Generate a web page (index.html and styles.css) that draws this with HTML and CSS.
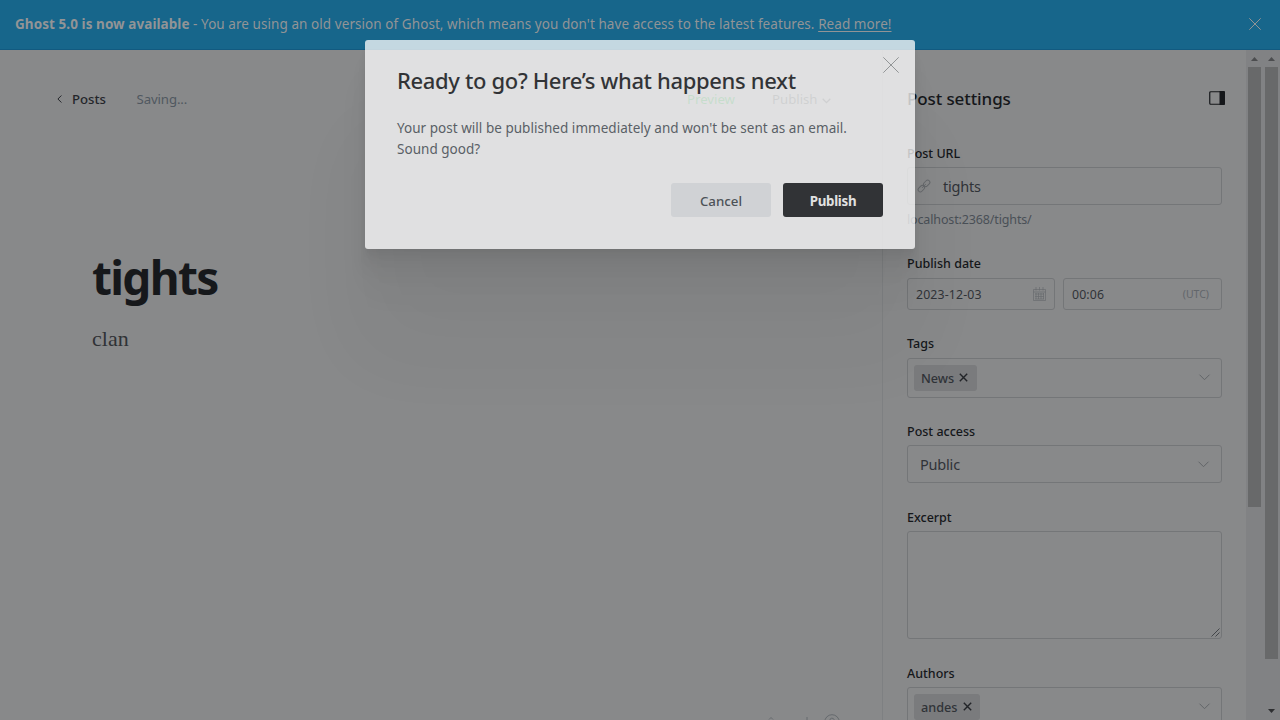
FILE: index.html
```
<!DOCTYPE html>
<html lang="en">
<head>
<meta charset="utf-8">
<title>Ghost editor</title>
<link rel="stylesheet" href="styles.css">
</head>
<body>
<div class="app">
  <header class="banner">
    <p class="banner-text"><b>Ghost 5.0 is now available</b> - You are using an old version of Ghost, which means you don't have access to the latest features. <a>Read more!</a></p>
    <svg class="banner-close" width="12" height="12" viewBox="0 0 12 12"><path d="M.3.3l11.4 11.4M11.7.3L.3 11.7"/></svg>
  </header>
  <div class="workspace">
    <main class="editor">
      <nav class="toolbar">
        <svg class="back" width="5" height="8" viewBox="0 0 5 8"><path d="M4.4.5L.9 4l3.5 3.5"/></svg>
        <span class="posts">Posts</span>
        <span class="saving">Saving...</span>
        <span class="preview">Preview</span>
        <span class="publish">Publish</span>
        <svg class="publish-arrow" width="9" height="6" viewBox="0 0 9 6"><path d="M.7.8l3.8 3.8L8.3.8"/></svg>
      </nav>
      <h1 class="post-title">tights</h1>
      <p class="post-body">clan</p>
      <footer class="status">
        <svg width="64" height="16" viewBox="0 0 64 16"><path d="M0 5.5l2-2 2 2M38 3v9"/></svg>
        <svg class="help" width="16" height="16" viewBox="0 0 16 16"><circle cx="8" cy="8" r="7.3"/><path d="M5.8 6.4a2.2 2.2 0 1 1 3 2q-.8.4-.8 1.6"/></svg>
      </footer>
    </main>
    <aside class="settings">
      <div class="settings-head">
        <h2>Post settings</h2>
        <svg width="16" height="14" viewBox="0 0 16 14"><rect x=".75" y=".75" width="14.5" height="12.5" rx="1"/><path class="solid" d="M10.5 0H15a1 1 0 0 1 1 1v12a1 1 0 0 1-1 1h-4.500z"/></svg>
      </div>
      <section class="field url">
        <label>Post URL</label>
        <div class="box">
          <svg class="link" width="14" height="14" viewBox="0 0 14 14"><rect x="-3.6" y="-2.2" width="7.200" height="4.400" rx="2.200" transform="translate(4.300 9.700) rotate(-45)"/><rect x="-3.600" y="-2.200" width="7.200" height="4.400" rx="2.200" transform="translate(9.700 4.300) rotate(-45)"/><path d="M5.200 8.800l3.600-3.600"/></svg>
          <span class="value slug">tights</span>
        </div>
        <p class="hint">localhost:2368/tights/</p>
      </section>
      <section class="field date">
        <label>Publish date</label>
        <div class="pair">
          <div class="box day"><span>2023-12-03</span>
            <svg width="13" height="14" viewBox="0 0 13 14"><path d="M.5 2.500h12v11H.5zM.5 5h12M3 0v3.500M6.500 0v3.500M10 0v3.500M3 6v6M5.500 6v6M8 6v6M10.500 6v6M2 7h9M2 9.500h9M2 12h9"/></svg>
          </div>
          <div class="box time"><span>00:06</span><small>(UTC)</small></div>
        </div>
      </section>
      <section class="field tags">
        <label>Tags</label>
        <div class="box"><span class="chip news"><span>News</span><svg width="9" height="9" viewBox="0 0 9 9"><path d="M.8.8l7.400 7.400M8.200.8L.8 8.200"/></svg></span><svg class="arrow" width="11" height="7" viewBox="0 0 11 7"><path d="M.5.7l5 5 5-5"/></svg></div>
      </section>
      <section class="field access">
        <label>Post access</label>
        <div class="box"><span class="value">Public</span><svg class="arrow" width="11" height="7" viewBox="0 0 11 7"><path d="M.5.7l5 5 5-5"/></svg></div>
      </section>
      <section class="field excerpt">
        <label>Excerpt</label>
        <div class="box"><svg class="grip" width="9" height="9" viewBox="0 0 9 9"><path d="M.5 8.500l8-8M4.500 8.500l4-4"/></svg></div>
      </section>
      <section class="field authors">
        <label>Authors</label>
        <div class="box"><span class="chip andes"><span>andes</span><svg width="9" height="9" viewBox="0 0 9 9"><path d="M.8.8l7.400 7.400M8.200.8L.8 8.200"/></svg></span><svg class="arrow" width="11" height="7" viewBox="0 0 11 7"><path d="M.5.7l5 5 5-5"/></svg></div>
      </section>
    </aside>
    <div class="scroll inner"><i class="up"></i><div class="thumb"></div></div>
    <div class="scroll outer"><i class="up"></i><div class="thumb"></div><i class="down"></i></div>
  </div>
</div>
<div class="modal" role="dialog">
  <svg class="modal-close" width="16" height="16" viewBox="0 0 16 16"><path d="M.3.3l15.400 15.400M15.700.3L.3 15.700"/></svg>
  <h2 class="modal-title">Ready to go? Here’s what happens next</h2>
  <p class="modal-text"><span class="line-one">Your post will be published immediately and won't be sent as an email.</span><br><span class="line-two">Sound good?</span></p>
  <div class="modal-actions"><button class="cancel">Cancel</button><button class="confirm">Publish</button></div>
</div>
</body>
</html>
```
FILE: styles.css
```
* { box-sizing: border-box; margin: 0; padding: 0; }
body { width: 1280px; height: 720px; overflow: hidden; position: relative; background: #88898a; font-family: "Noto Sans", "Open Sans", sans-serif; color: #15171a; font-size: 13px; }
svg { display: block; flex: none; fill: none; stroke: currentColor; overflow: visible; }
span, p, label, h1, h2 { white-space: nowrap; }
.app { height: 720px; display: flex; flex-direction: column; }
.banner { height: 50px; flex: none; background: #17668b; border-bottom: 1px solid #125a80; display: flex; align-items: center; justify-content: space-between; padding: 0 19px 1px 15px; color: #929496; }
.banner-text { font-size: 13.500px; line-height: 20px; letter-spacing: .065px; }
.banner a { text-decoration: underline; text-underline-offset: 2px; }
.workspace { flex: 1; min-height: 0; display: flex; }
.editor { width: 882px; display: flex; flex-direction: column; overflow: hidden; }
.toolbar { height: 98px; flex: none; display: flex; align-items: center; padding-left: 57px; font-size: 13.200px; }
.posts { margin-left: 10px; width: 64.500px; font-weight: 500; color: #24262a; }
.back { color: #24262a; }
.saving { width: 550.500px; letter-spacing: -.1px; color: #505860; }
.preview { width: 85px; color: #207a38; font-weight: 400; }
.publish { width: 50px; color: #45484d; font-weight: 400; }
.publish-arrow { color: #45484d; stroke-width: 1.300; margin-top: 4px; }
.post-title { margin: 99px 0 0 92px; font-size: 46px; line-height: 60px; font-weight: 700; letter-spacing: -1.700px; color: #16181b; }
.post-body { margin: 16px 0 0 92px; font: 22px/32px "Liberation Serif", serif; color: #303236; }
.status { margin: 359px 0 0 769px; display: flex; flex: none; color: #666a6e; }
.status .help { margin-left: -9px; }
.settings { width: 364px; border-left: 1px solid #7e8082; padding: 0 24px; overflow: hidden; }
.settings-head { height: 94px; padding: 2px 0 0; display: flex; align-items: center; justify-content: space-between; margin-right: -3px; }
.settings-head h2 { font-size: 17px; font-weight: 500; letter-spacing: -.1px; line-height: 24px; padding-top: 2px; }
.settings-head svg { stroke-width: 1.200; }
.settings-head .solid { fill: currentColor; stroke: none; }
.field label { display: block; height: 23px; line-height: 20px; font-size: 12.500px; font-weight: 500; }
.box { width: 315px; border: 1px solid #747678; border-radius: 3px; display: flex; align-items: center; color: #303338; }
.value { font-size: 14.500px; letter-spacing: -.2px; }
.url .box { height: 38px; padding-left: 9px; }
.url { height: 110px; }
.link { color: #66696c; margin-right: 12px; }
.hint { margin-top: 5px; line-height: 20px; font-size: 12.500px; letter-spacing: -.14px; color: #4a5057; }
.date { height: 80px; }
.date label { height: 24px; }
.pair { display: flex; gap: 8px; }
.date .box { height: 32px; padding: 0 8px; justify-content: space-between; font-size: 12.300px; letter-spacing: .15px; }
.date .day { width: 148px; }
.day svg { color: #696c6e; stroke-width: .7; }
.date .time { width: 159px; padding-right: 12px; }
.time small { font-size: 10.500px; letter-spacing: 0; color: #62666a; }
.tags { height: 88px; }
.tags label { height: 24px; }
.tags .box, .authors .box { height: 40px; padding: 0 11px 1px 6px; justify-content: space-between; }
.chip { height: 26px; background: #7a7b7d; border-radius: 3px; display: flex; align-items: center; gap: 5px; padding: 0 7px; font-size: 12.700px; font-weight: 500; color: #303338; }
.chip svg { stroke-width: 1.400; color: #222428; }
.news { width: 63px; }
.andes { width: 66px; }
.arrow { color: #626568; }
.access { height: 86px; }
.access .box { height: 38px; padding: 0 12px; justify-content: space-between; }
.excerpt { height: 156px; }
.excerpt .box { height: 108px; align-items: flex-end; justify-content: flex-end; padding: 0 1px 1px 0; }
.grip { stroke-width: .8; }
.scroll { width: 17px; background: #818284; padding: 7px 2px 0 2px; display: flex; flex-direction: column; align-items: flex-start; }
.up, .down { width: 7px; height: 4px; margin-left: 3px; background: #4c4d4f; flex: none; }
.up { clip-path: polygon(50% 0, 100% 100%, 0 100%); }
.down { clip-path: polygon(0 0, 100% 0, 50% 100%); background: #2e2f31; margin-top: 50px; }
.thumb { width: 13px; margin-top: 6px; background: #68696a; flex: none; }
.inner .thumb { height: 440px; }
.outer .thumb { height: 592px; }
.modal { position: absolute; left: 365px; top: 40px; width: 550px; height: 209px; padding: 26px 32px 32px; background: #fefefe; border-radius: 3px; opacity: .75; box-shadow: 0 2.800px 2.200px rgba(0,0,0,.02), 0 6.700px 5.300px rgba(0,0,0,.028), 0 12.500px 10px rgba(0,0,0,.035), 0 22.300px 17.900px rgba(0,0,0,.04), 0 41.800px 33.400px rgba(0,0,0,.04), 0 100px 80px rgba(0,0,0,.05); }
.modal-close { position: absolute; right: 16px; top: 17px; color: #8a8d90; stroke-width: .9; }
.modal-title { font-size: 22px; line-height: 28px; font-weight: 500; letter-spacing: -.35px; }
.modal-text { margin-top: 24px; font-size: 13.500px; line-height: 21px; letter-spacing: .03px; color: #4b525a; }
.modal-actions { margin-top: 23px; display: flex; justify-content: flex-end; gap: 12px; }
.modal-actions button { width: 100px; height: 34px; border: 0; border-radius: 3px; font: 500 13.300px "Noto Sans", sans-serif; background: #e8ebef; color: #394047; padding-top: 1px; }
.modal-actions .confirm { background: #15171a; color: #fff; font-weight: 700; letter-spacing: -.3px; }
```
